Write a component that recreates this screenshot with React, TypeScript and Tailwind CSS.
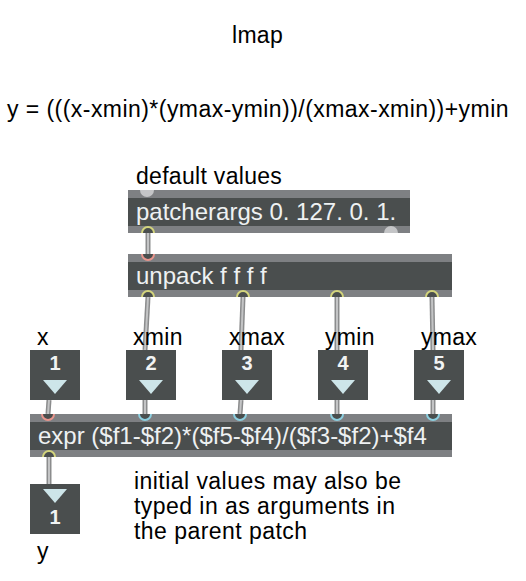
import React from 'react';

type PortKind = 'hot' | 'cold' | 'out' | 'idle';

type Port = {
  pos: string;
  edge: 'top' | 'bottom';
  kind: PortKind;
};

const portLook: Record<PortKind, string> = {
  hot: 'border-2 border-[#e8948c] bg-[#4a4e4e]',
  cold: 'border-2 border-[#8ccfe0] bg-[#4a4e4e]',
  out: 'border-2 border-[#d3d47c] bg-[#4a4e4e]',
  idle: 'bg-[#c4c5c7]',
};

// patch cords, drawn under the boxes
const cords: [number, number, number, number][] = [
  [148, 233, 148, 254],
  [148, 297, 145, 350],
  [243, 297, 241, 350],
  [337, 297, 337, 350],
  [432, 297, 433, 350],
  [49, 400, 48, 414],
  [145, 400, 145, 414],
  [241, 400, 240, 414],
  [337, 400, 337, 414],
  [433, 400, 433, 414],
  [49, 457, 49, 484],
];

const inputs = [
  { label: 'x', value: '1' },
  { label: 'xmin', value: '2' },
  { label: 'xmax', value: '3' },
  { label: 'ymin', value: '4' },
  { label: 'ymax', value: '5' },
];

const PortDot: React.FC<Port> = ({ pos, edge, kind }) => (
  <div
    className={`absolute h-[14px] w-[14px] rounded-full ${edge === 'top' ? 'top-[-7px]' : 'bottom-[-7px]'} ${pos} ${portLook[kind]}`}
  />
);

const ObjectBox: React.FC<{ className: string; text: string; ports: Port[] }> = ({ className, text, ports }) => (
  <div className={`absolute h-[43px] overflow-hidden bg-[#7e8083] ${className}`}>
    <div className="mt-[8px] h-[28px] whitespace-nowrap bg-[#4a4e4e] pl-[8px] text-[24px] leading-[28px] text-[#eef1f2]">
      {text}
    </div>
    {ports.map((port, i) => (
      <PortDot key={i} {...port} />
    ))}
  </div>
);

const Arrow = () => (
  <div className="h-0 w-0 border-x-[12px] border-t-[14px] border-x-transparent border-t-[#cde5e9]" />
);

const Digit: React.FC<{ value: string }> = ({ value }) => (
  <div className="text-[20px] font-bold leading-[20px] text-[#f1f3f3]">{value}</div>
);

const NumberBox: React.FC<{ value: string; output?: boolean }> = ({ value, output }) => (
  <div
    className={`flex h-[50px] w-[50px] flex-col items-center bg-[#4a4e4e] ${output ? 'gap-[4px] pt-[5px]' : 'gap-[7px] pt-[3px]'}`}
  >
    {output ? (
      <>
        <Arrow />
        <Digit value={value} />
      </>
    ) : (
      <>
        <Digit value={value} />
        <Arrow />
      </>
    )}
  </div>
);

const text23 = 'whitespace-nowrap text-[23px] leading-[23px] tracking-[0.3px] text-black';

export default function App() {
  return (
    <div className="relative h-[581px] w-[526px] overflow-hidden bg-white font-['Liberation_Sans',Arial,sans-serif]">
      <svg className="absolute inset-0" width={526} height={581}>
        {cords.map(([x1, y1, x2, y2], i) => (
          <g key={i}>
            <line x1={x1} y1={y1} x2={x2} y2={y2} stroke="#8b8c8d" strokeWidth={5} />
            <line x1={x1} y1={y1} x2={x2} y2={y2} stroke="#c3c4c5" strokeWidth={2} />
          </g>
        ))}
      </svg>

      <div className="relative flex flex-col pt-[24px]">
        <div className={`pr-[11px] text-center ${text23}`}>lmap</div>
        <div className={`mt-[51px] pl-[7px] ${text23} tracking-[0.45px]`}>
          y = (((x-xmin)*(ymax-ymin))/(xmax-xmin))+ymin
        </div>
        <div className={`mt-[44px] pl-[136px] ${text23}`}>default values</div>
      </div>

      <ObjectBox
        className="left-[128px] top-[190px] w-[282px]"
        text="patcherargs 0. 127. 0. 1."
        ports={[
          { pos: 'left-[12px]', edge: 'top', kind: 'idle' },
          { pos: 'left-[13px]', edge: 'bottom', kind: 'out' },
          { pos: 'left-[256px]', edge: 'bottom', kind: 'idle' },
        ]}
      />

      <ObjectBox
        className="left-[128px] top-[254px] w-[324px]"
        text="unpack f f f f"
        ports={[
          { pos: 'left-[13px]', edge: 'top', kind: 'hot' },
          { pos: 'left-[13px]', edge: 'bottom', kind: 'out' },
          { pos: 'left-[108px]', edge: 'bottom', kind: 'out' },
          { pos: 'left-[202px]', edge: 'bottom', kind: 'out' },
          { pos: 'left-[297px]', edge: 'bottom', kind: 'out' },
        ]}
      />

      <div className="absolute left-[30px] top-[326px] flex gap-[46px]">
        {inputs.map((input) => (
          <div key={input.label} className="flex w-[50px] shrink-0 flex-col gap-[1px]">
            <div className={`pl-[7px] ${text23}`}>{input.label}</div>
            <NumberBox value={input.value} />
          </div>
        ))}
      </div>

      <ObjectBox
        className="left-[30px] top-[414px] w-[422px]"
        text="expr ($f1-$f2)*($f5-$f4)/($f3-$f2)+$f4"
        ports={[
          { pos: 'left-[11px]', edge: 'top', kind: 'hot' },
          { pos: 'left-[108px]', edge: 'top', kind: 'cold' },
          { pos: 'left-[203px]', edge: 'top', kind: 'cold' },
          { pos: 'left-[300px]', edge: 'top', kind: 'cold' },
          { pos: 'left-[396px]', edge: 'top', kind: 'cold' },
          { pos: 'left-[12px]', edge: 'bottom', kind: 'out' },
        ]}
      />

      <div className="absolute left-[30px] top-[469px] flex items-start gap-[54px]">
        <div className="mt-[15px] flex w-[50px] shrink-0 flex-col gap-[6px]">
          <NumberBox value="1" output />
          <div className={`pl-[7px] ${text23}`}>y</div>
        </div>
        <div className="text-[23px] leading-[25px] tracking-[0.45px] text-black">
          <div>initial values may also be</div>
          <div>typed in as arguments in</div>
          <div>the parent patch</div>
        </div>
      </div>
    </div>
  );
}
